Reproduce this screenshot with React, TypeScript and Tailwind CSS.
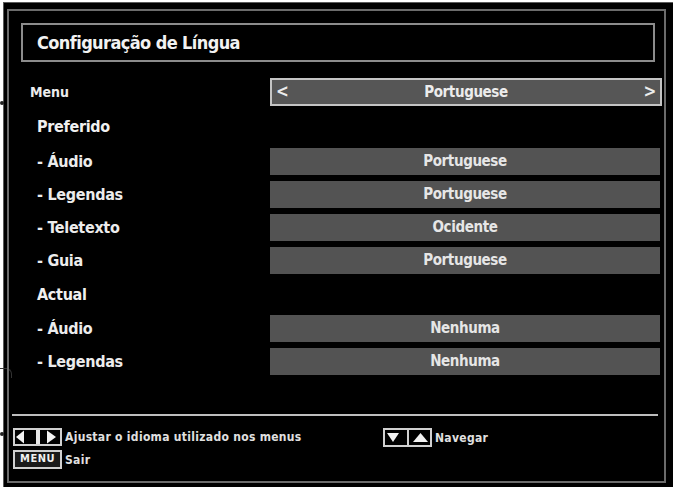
import { ReactNode } from 'react'

const tv = "font-['Liberation_Sans_Narrow','DejaVu_Sans_Condensed',sans-serif] font-bold"

function ValueBar({ children, select }: { children: ReactNode; select?: boolean }) {
  if (select) {
    return (
      <div className="flex h-[28px] w-[392px] items-center justify-between border-2 border-[#c4c4c4] bg-[#565656] px-[4px] text-[15px] tracking-[-0.4px] text-[#ececec]">
        <span className="text-[17px]">&lt;</span>
        <span>{children}</span>
        <span className="text-[17px]">&gt;</span>
      </div>
    )
  }
  return (
    <div className="flex h-[27px] w-[390px] items-center justify-center bg-[#535353] text-[15px] tracking-[-0.4px] text-[#e6e6e6]">
      {children}
    </div>
  )
}

function Row({ label, value }: { label: string; value: string }) {
  return (
    <div className="flex h-[27px] items-center">
      <span className="w-[261px] pl-[28px] text-[16px] tracking-[-0.3px] text-[#ececec]">{label}</span>
      <ValueBar>{value}</ValueBar>
    </div>
  )
}

function Heading({ children, h }: { children: ReactNode; h: string }) {
  return (
    <div className={`flex items-center pl-[28px] text-[16px] tracking-[-0.3px] text-[#f0f0f0] ${h}`}>
      {children}
    </div>
  )
}

function LeftRightKey() {
  return (
    <svg width="49" height="18" viewBox="0 0 49 18">
      <rect x="1" y="1" width="47" height="16" fill="#000" stroke="#d0d0d0" strokeWidth="2" />
      <polygon points="3,9 11,2.5 11,15.5" fill="#f2f2f2" />
      <rect x="23" y="2" width="4" height="14" fill="#e8e8e8" />
      <polygon points="34,2.5 43,9 34,15.5" fill="#f2f2f2" />
    </svg>
  )
}

function UpDownKey() {
  return (
    <svg width="49" height="19" viewBox="0 0 49 19">
      <rect x="1" y="1" width="47" height="17" fill="#000" stroke="#d0d0d0" strokeWidth="2" />
      <polygon points="4,5 16,5 10,14" fill="#f2f2f2" />
      <rect x="24" y="2" width="2" height="15" fill="#d0d0d0" />
      <polygon points="30,14 45,14 37.5,5" fill="#f2f2f2" />
    </svg>
  )
}

export default function App() {
  return (
    <div className={`relative h-[487px] w-[673px] overflow-hidden bg-white pl-[3px] pt-[2px] ${tv}`}>
      {/* scan marks on the left margin */}
      <span className="absolute left-0 top-[101px] h-[4px] w-[4px] rounded-full bg-[#222]" />
      <span className="absolute left-0 top-[368px] h-[10px] w-[12px] rounded-tr-[6px] border-r border-t border-[#333]" />
      <span className="absolute left-0 top-[432px] h-[4px] w-[4px] rounded-full bg-[#222]" />

      <div className="h-full border-l border-t border-[#5a5a5a] bg-black pl-[3px] pt-[6px]">
        <div className="relative flex h-[474px] w-[659px] flex-col border-2 border-[#6c6c6c]">
          <div className="ml-[12px] mt-[12px] flex h-[39px] w-[634px] items-center border-2 border-[#8c8c8c] pl-[14px] text-[18px] tracking-[-0.6px] text-[#f2f2f2]">
            Configuração de Língua
          </div>

          <div className="mt-[16px] flex h-[28px] items-center">
            <span className="w-[261px] pl-[21px] text-[14px] text-[#ececec]">Menu</span>
            <ValueBar select>Portuguese</ValueBar>
          </div>

          <Heading h="h-[42px]">Preferido</Heading>
          <div className="flex flex-col gap-[6px]">
            <Row label="- Áudio" value="Portuguese" />
            <Row label="- Legendas" value="Portuguese" />
            <Row label="- Teletexto" value="Ocidente" />
            <Row label="- Guia" value="Portuguese" />
          </div>

          <Heading h="h-[41px]">Actual</Heading>
          <div className="flex flex-col gap-[6px]">
            <Row label="- Áudio" value="Nenhuma" />
            <Row label="- Legendas" value="Nenhuma" />
          </div>

          <div className="ml-[3px] mt-[39px] h-[2px] w-[646px] bg-[#bdbdbd]" />

          <div className="ml-[4px] mt-[12px] flex text-[12px] tracking-[0.3px] text-[#e0e0e0]">
            <div className="flex w-[370px] flex-col gap-[4px]">
              <div className="flex items-center gap-[3px]">
                <LeftRightKey />
                <span>Ajustar o idioma utilizado nos menus</span>
              </div>
              <div className="flex items-center gap-[3px]">
                <span className="flex h-[19px] w-[49px] items-center justify-center border-2 border-[#d0d0d0] bg-[#1a1a1a] text-[11px] tracking-[0.5px] text-[#f0f0f0]">
                  MENU
                </span>
                <span>Sair</span>
              </div>
            </div>
            <div className="flex h-[19px] items-center gap-[3px]">
              <UpDownKey />
              <span>Navegar</span>
            </div>
          </div>
        </div>
      </div>
    </div>
  )
}
